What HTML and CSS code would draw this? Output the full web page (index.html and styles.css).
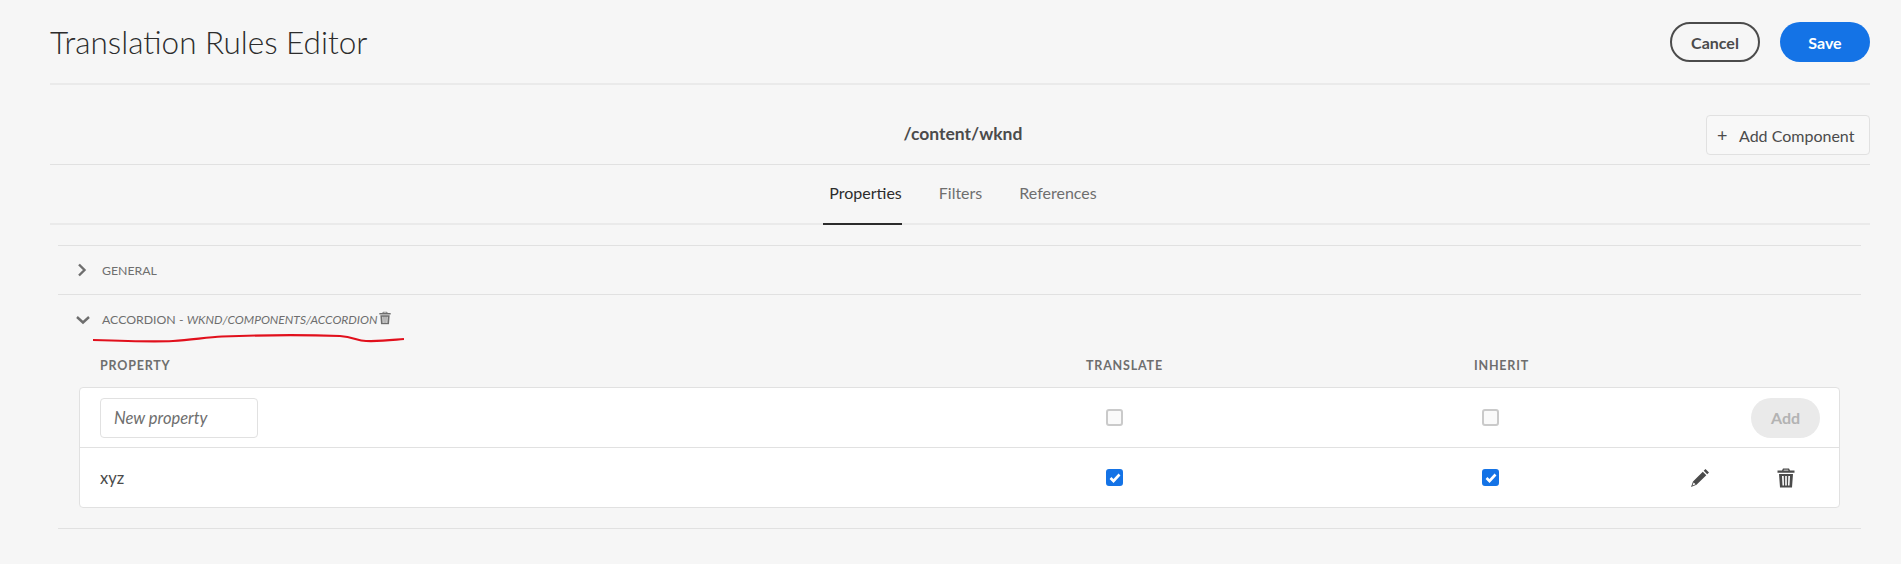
FILE: index.html
```html
<!DOCTYPE html>
<html lang="en">
<head>
<meta charset="UTF-8">
<title>Translation Rules Editor</title>
<link rel="stylesheet" href="styles.css">
</head>
<body>

<div class="page">
    <header class="topbar">
        <h1 class="page-title">Translation Rules Editor</h1>
        <div class="actions">
            <button class="btn btn-outline">Cancel</button>
            <button class="btn btn-primary">Save</button>
        </div>
    </header>

    <div class="context">
        <div class="context-path">/content/wknd</div>
        <button class="add-component"><span class="plus">+</span>Add Component</button>
    </div>

    <nav class="tabs">
        <a class="tab tab-active">Properties</a>
        <a class="tab">Filters</a>
        <a class="tab">References</a>
    </nav>

    <section class="accordion">
        <div class="acc-item acc-closed">
            <svg class="chevron" width="10" height="14" viewBox="0 0 10 14"><path d="M2 1.500L7.500 7 2 12.500" fill="none" stroke="#6e6e6e" stroke-width="2.400"/></svg>
            <span class="acc-label">GENERAL</span>
        </div>

        <div class="acc-item acc-open">
            <div class="acc-head">
                <svg class="chevron chevron-down" width="14" height="10" viewBox="0 0 14 10"><path d="M1 2l6 5.500L13 2" fill="none" stroke="#6e6e6e" stroke-width="2.400"/></svg>
                <span class="acc-label">ACCORDION - <em>WKND/COMPONENTS/ACCORDION</em></span>
                <svg class="trash-small" width="12" height="14" viewBox="0 0 18 20"><use href="#trash"/></svg>
            </div>

            <!-- hand drawn annotation on the screenshot -->
            <svg class="scribble" width="320" height="10" viewBox="0 0 320 10"><path d="M1 6C30 7 60 8 81 7 100 6 115 3 130 2.500 170 1 220 1 248 2 262 3 265 7 274 7 290 7.500 300 6 312 5" fill="none" stroke="#e1101c" stroke-width="2.200"/></svg>

            <div class="table-head">
                <div>PROPERTY</div>
                <div>TRANSLATE</div>
                <div>INHERIT</div>
            </div>

            <div class="rules-card">
                <div class="rule-row">
                    <input class="new-prop" type="text" placeholder="New property">
                    <span class="check"></span>
                    <span class="check"></span>
                    <span class="cell-add"><button class="btn btn-disabled">Add</button></span>
                </div>
                <div class="rule-row">
                    <span class="prop-name">xyz</span>
                    <span class="check check-on"><svg width="12" height="10" viewBox="0 0 12 10"><path d="M1.500 5l3 3 6-6.500" fill="none" stroke="#fff" stroke-width="2.600"/></svg></span>
                    <span class="check check-on"><svg width="12" height="10" viewBox="0 0 12 10"><path d="M1.500 5l3 3 6-6.500" fill="none" stroke="#fff" stroke-width="2.600"/></svg></span>
                    <span class="cell-icon">
                        <svg width="20" height="20" viewBox="0 0 20 20"><path d="M15.500 1L19 4.500 17.200 6.300 13.700 2.800zM12.800 3.700L16.300 7.200 6.500 16.800 1 19 3 13.500zM3.600 14.400L2.500 17.500 5.600 16.300z" fill="#4b4b4b" fill-rule="evenodd"/></svg>
                    </span>
                    <span class="cell-icon">
                        <svg width="18" height="20" viewBox="0 0 18 20"><use href="#trash"/></svg>
                    </span>
                </div>
            </div>
        </div>
    </section>
</div>

<svg class="defs" width="0" height="0">
    <symbol id="trash" viewBox="0 0 18 20">
        <path d="M6 0.500H12L13 2.500H17.500V4.800H.5V2.500H5zM7 1.800L6.500 2.500H11.500L11 1.800zM2 6H16L15 19.500H3zM5 8L5.500 17.500H7L6.700 8zM8.200 8V17.500H9.800V8zM11.300 8L11 17.500H12.500L13 8z" fill="currentColor" fill-rule="evenodd"/>
    </symbol>
</svg>

</body>
</html>
```
FILE: styles.css
```css
* {
    box-sizing: border-box;
}

body {
    margin: 0;
    height: 564px;
    overflow: hidden;
    background-color: #f6f6f6;
    color: #4b4b4b;
    font-family: 'Lato', 'Open Sans', sans-serif;
}

.page {
    padding: 0 31px 0 50px;
}

/* Top bar */
.topbar {
    display: flex;
    align-items: center;
    justify-content: space-between;
    height: 85px;
    padding-top: 1px;
    border-bottom: 2px solid #eaeaea;
}

.page-title {
    margin: 0;
    font-size: 31.500px;
    font-weight: 300;
    color: #2c2c2c;
}

.actions {
    display: flex;
    gap: 20px;
}

.btn {
    height: 40px;
    border-radius: 20px;
    font-family: inherit;
    font-size: 16px;
    font-weight: 700;
    border: 2px solid transparent;
    padding: 0;
}

.btn-outline {
    width: 90px;
    background: transparent;
    border-color: #4b4b4b;
    color: #4b4b4b;
}

.btn-primary {
    width: 90px;
    background-color: #1473e6;
    color: #fff;
}

.btn-disabled {
    width: 69px;
    background-color: #eaeaea;
    color: #b3b3b3;
}

/* Path row */
.context {
    display: flex;
    align-items: flex-end;
    justify-content: flex-end;
    position: relative;
    height: 80px;
    padding-bottom: 9px;
    border-bottom: 1px solid #e1e1e1;
}

.context-path {
    position: absolute;
    left: 6px;
    right: 0;
    top: 38px;
    text-align: center;
    font-size: 17.500px;
    font-weight: 700;
}

.add-component {
    width: 164px;
    height: 40px;
    background: #f8f8f8;
    border: 1px solid #e1e1e1;
    border-radius: 4px;
    font-family: inherit;
    font-size: 16px;
    color: #4b4b4b;
    padding: 0 0 0 10px;
    text-align: left;
}

.plus {
    display: inline-block;
    width: 22px;
    font-size: 18px;
}

/* Tabs */
.tabs {
    display: flex;
    justify-content: center;
    gap: 31px;
    height: 60px;
    border-bottom: 2px solid #eaeaea;
}

.tab {
    height: 60px;
    padding: 18px 0 0 6px;
    font-size: 16px;
    color: #6e6e6e;
}

.tab-active {
    color: #2c2c2c;
    border-bottom: 2px solid #2c2c2c;
}

/* Accordion */
.accordion {
    margin: 20px 9px 0 8px;
    border-top: 1px solid #e1e1e1;
}

.acc-item {
    border-bottom: 1px solid #e1e1e1;
}

.acc-closed {
    display: flex;
    align-items: center;
    height: 49px;
}

.acc-label {
    font-size: 12.300px;
    color: #6e6e6e;
}

.acc-label em {
    font-size: 12px;
}

.chevron {
    margin-left: 19px;
    margin-right: 15px;
}

.chevron-down {
    margin-left: 18px;
    margin-right: 12px;
}

.acc-open {
    position: relative;
    height: 234px;
}

.acc-head {
    display: flex;
    align-items: center;
    height: 49px;
}

.trash-small {
    margin: -4px 0 0 2px;
    color: #6e6e6e;
}

.scribble {
    position: absolute;
    left: 34px;
    top: 39px;
}

.table-head {
    display: grid;
    grid-template-columns: 986px 388px 1fr;
    padding: 14px 0 0 42px;
    height: 43px;
    font-size: 12.500px;
    font-weight: 700;
    letter-spacing: 0.800px;
    color: #6e6e6e;
}

.rules-card {
    margin: 0 21px;
    background-color: #fff;
    border: 1px solid #e1e1e1;
    border-radius: 4px;
}

.rule-row {
    display: grid;
    grid-template-columns: 1006px 376px 208px 87px 1fr;
    align-items: center;
    height: 59px;
    padding-left: 20px;
}

.rule-row + .rule-row {
    border-top: 1px solid #e1e1e1;
    height: 60px;
}

.new-prop {
    width: 158px;
    height: 40px;
    padding: 0 13px;
    border: 1px solid #e1e1e1;
    border-radius: 4px;
    background: #fff;
    font-family: inherit;
    font-size: 16.500px;
    font-style: italic;
    color: #6e6e6e;
}

.new-prop::placeholder {
    color: #6e6e6e;
}

.prop-name {
    font-size: 16.500px;
}

.check {
    display: flex;
    align-items: center;
    justify-content: center;
    width: 17px;
    height: 17px;
    border: 2px solid #cacaca;
    border-radius: 3px;
    background-color: #fafafa;
}

.check-on {
    border-color: #1473e6;
    background-color: #1473e6;
}

.cell-add {
    grid-column: 4 / 6;
    justify-self: start;
    margin-left: 61px;
}

.cell-icon {
    display: flex;
    color: #4b4b4b;
}

.defs {
    position: absolute;
}
```
